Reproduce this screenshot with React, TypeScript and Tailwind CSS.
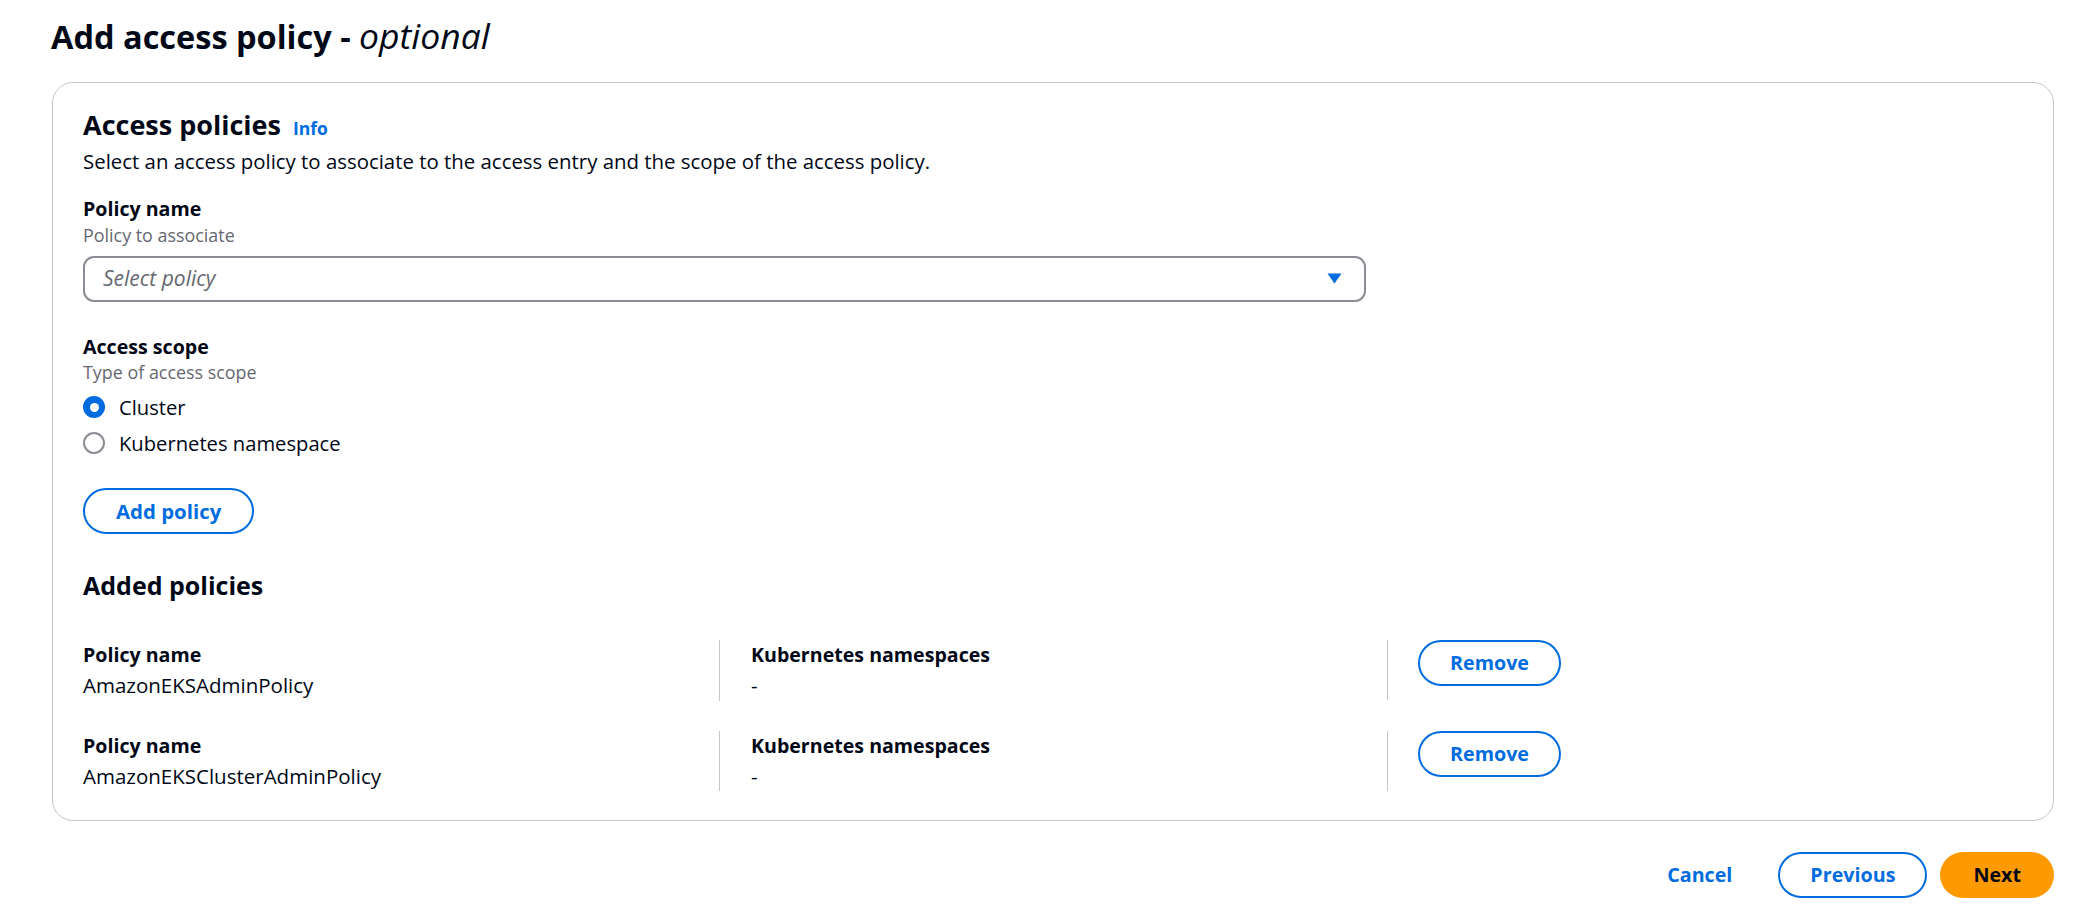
import React from 'react';

const font = { fontFamily: '"Open Sans", "Noto Sans", Arial, sans-serif' };

function Radio({ checked, label }: { checked: boolean; label: string }) {
  return (
    <label className="flex items-center h-[26.67px] gap-[14px] cursor-pointer">
      {checked ? (
        <span className="w-[22px] h-[22px] rounded-full bg-[#006ce0] flex items-center justify-center shrink-0">
          <span className="w-[9px] h-[9px] rounded-full bg-white" />
        </span>
      ) : (
        <span className="w-[22px] h-[22px] rounded-full border-[2.5px] border-[#8c8c94] bg-white shrink-0" />
      )}
      <span className="text-[20.2px] leading-[26.67px] text-[#000716]">{label}</span>
    </label>
  );
}

function OutlineButton({ children, className = '' }: { children: React.ReactNode; className?: string }) {
  return (
    <button
      className={`h-[46px] px-[30px] rounded-[24px] border-[2.5px] border-[#006ce0] bg-white text-[#006ce0] text-[19.7px] font-bold leading-[26px] ${className}`}
    >
      {children}
    </button>
  );
}

function AddedRow({ name }: { name: string }) {
  return (
    <div className="flex">
      <div className="w-[636px] py-[2px]">
        <div className="text-[19.6px] leading-[26.67px] font-bold text-[#000716]">Policy name</div>
        <div className="mt-[3px] text-[20.5px] leading-[26.67px] text-[#000716]">{name}</div>
      </div>
      <div className="w-[668px] border-l border-[#c6c6cd] pl-[31px] py-[2px]">
        <div className="text-[19.6px] leading-[26.67px] font-bold text-[#000716]">Kubernetes namespaces</div>
        <div className="mt-[3px] text-[20.5px] leading-[26.67px] text-[#000716]">-</div>
      </div>
      <div className="border-l border-[#c6c6cd] pl-[30px] h-[60px]">
        <OutlineButton>Remove</OutlineButton>
      </div>
    </div>
  );
}

export default function App() {
  return (
    <div style={font} className="min-h-screen bg-white pl-[52px] pr-[42px] pt-[15px] text-[#000716]">
      <h1 className="h-[40px] text-[32.5px] leading-[40px] font-bold -ml-[1px] overflow-visible">
        Add access policy - <i className="font-normal text-[35.5px] leading-[40px]">optional</i>
      </h1>

      <div className="mt-[27px] border border-[#c6c6cd] rounded-[21px] pl-[30px] pr-[29px] pt-[26px] pb-[29px]">
        <div className="flex items-baseline gap-[12px] h-[32px]">
          <h2 className="text-[27px] leading-[32px] font-bold">Access policies</h2>
          <a className="text-[17.5px] font-bold text-[#006ce0]">Info</a>
        </div>
        <p className="mt-[7px] text-[20.4px] leading-[26.67px]">
          Select an access policy to associate to the access entry and the scope of the access policy.
        </p>

        <div className="mt-[21px]">
          <div className="text-[19.6px] leading-[26.67px] font-bold">Policy name</div>
          <div className="mt-[3px] text-[17.9px] leading-[21.33px] text-[#656871]">Policy to associate</div>
          <div className="mt-[9px] w-[1283px] h-[46px] border-[2.5px] border-[#8c8c94] rounded-[11px] flex items-center justify-between pl-[18px] pr-[22px]">
            <span className="italic text-[21px] text-[#656871]">Select policy</span>
            <svg width="15" height="11" viewBox="0 0 15 11">
              <path d="M0.5 0.5 H14.5 L7.5 10.5 Z" fill="#006ce0" />
            </svg>
          </div>
        </div>

        <div className="mt-[32px]">
          <div className="text-[19.6px] leading-[26.67px] font-bold">Access scope</div>
          <div className="mt-[2px] text-[17.9px] leading-[21.33px] text-[#656871]">Type of access scope</div>
          <div className="mt-[10px] flex flex-col gap-[9.5px]">
            <Radio checked label="Cluster" />
            <Radio checked={false} label="Kubernetes namespace" />
          </div>
        </div>

        <OutlineButton className="mt-[32px] px-[31px] text-[20.4px]">Add policy</OutlineButton>

        <h2 className="mt-[35px] text-[25px] leading-[32px] font-bold">Added policies</h2>

        <div className="mt-[39px] flex flex-col gap-[30px]">
          <AddedRow name="AmazonEKSAdminPolicy" />
          <AddedRow name="AmazonEKSClusterAdminPolicy" />
        </div>
      </div>

      <div className="mt-[31px] flex justify-end items-center">
        <button className="h-[46px] px-[26px] text-[#006ce0] text-[19.7px] font-bold">Cancel</button>
        <OutlineButton className="ml-[20px]">Previous</OutlineButton>
        <button className="ml-[13px] h-[46px] px-[33px] rounded-[24px] bg-[#ff9900] text-[#000716] text-[19.7px] font-bold">
          Next
        </button>
      </div>
    </div>
  );
}
